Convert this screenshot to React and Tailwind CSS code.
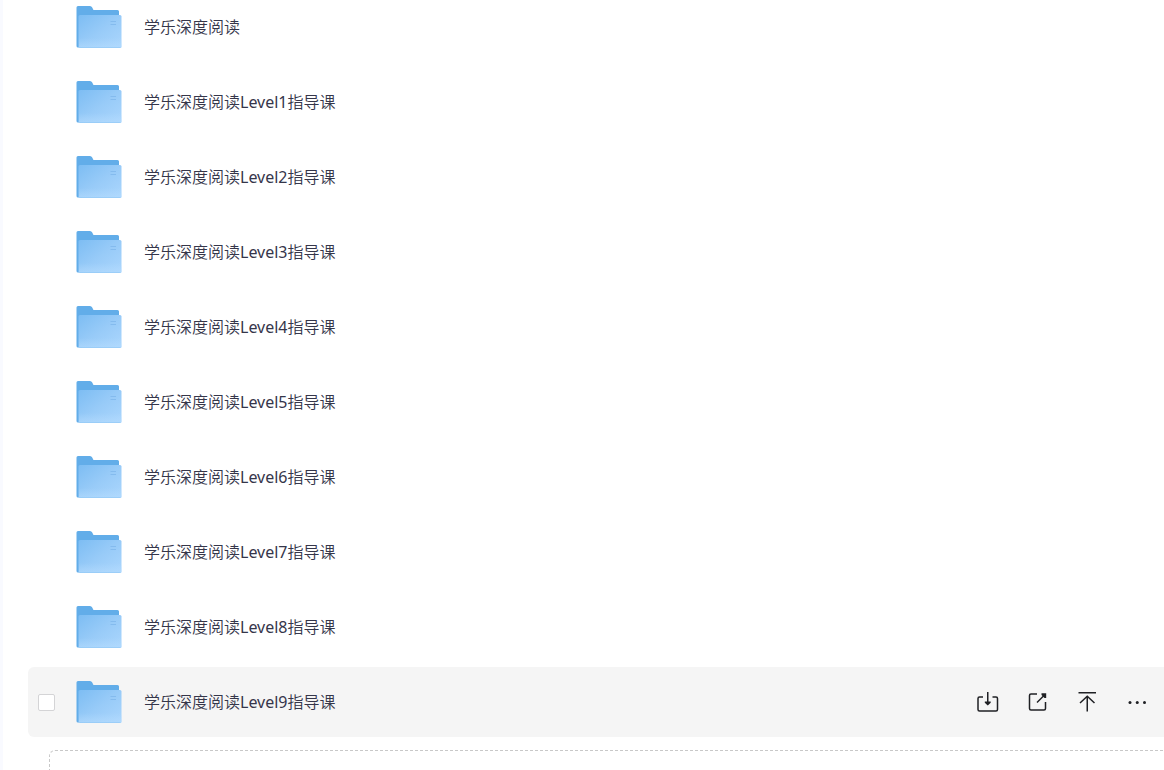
const folders = [
  "学乐深度阅读",
  "学乐深度阅读Level1指导课",
  "学乐深度阅读Level2指导课",
  "学乐深度阅读Level3指导课",
  "学乐深度阅读Level4指导课",
  "学乐深度阅读Level5指导课",
  "学乐深度阅读Level6指导课",
  "学乐深度阅读Level7指导课",
  "学乐深度阅读Level8指导课",
  "学乐深度阅读Level9指导课",
];

function FolderIcon() {
  return (
    <svg width="46" height="42" viewBox="0 0 46 42" className="shrink-0" aria-hidden="true">
      <defs>
        <linearGradient id="folder-front" x1="0" y1="0" x2="1" y2="1">
          <stop offset="0" stopColor="#7dbdf3" />
          <stop offset="0.5" stopColor="#98cbf8" />
          <stop offset="1" stopColor="#abd6fd" />
        </linearGradient>
        <linearGradient id="folder-shine" x1="0" y1="0" x2="0" y2="1">
          <stop offset="0" stopColor="#b5dcfe" stopOpacity="0" />
          <stop offset="1" stopColor="#b5dcfe" stopOpacity="0.6" />
        </linearGradient>
      </defs>
      <path d="M0.500 1.500Q0.500 0 2 0H14Q15.500 0 16.200 1.500L17.500 4H41.500Q43 4 43 5.500V41.500H2Q0.500 41.500 0.500 40Z" fill="#62ade9" />
      <rect x="2.500" y="9" width="43" height="33" rx="1.500" fill="url(#folder-front)" />
      <path d="M3 32H45.500V40.500Q45.500 42 44 42H4Q3 42 3 41Z" fill="url(#folder-shine)" />
      <path d="M3.500 41.600H44.500" stroke="#8cc4f4" strokeWidth="0.600" />
      <path d="M34.500 15.500H40M34.500 18.500H40" stroke="#84bbee" strokeWidth="1" />
    </svg>
  );
}

function DownloadIcon() {
  return (
    <svg width="24" height="24" viewBox="0 -1 24 24" fill="none" stroke="#1f2024" strokeWidth="1.5">
      <path d="M7 6H3.500Q2 6 2 7.500V18.500Q2 20 3.500 20H20Q21.500 20 21.500 18.500V7.500Q21.500 6 20 6H16.500" />
      <path d="M11.750 1V12" />
      <path d="M8.800 10.500H14.700V11.700L11.750 14.500L8.800 11.700Z" fill="#1f2024" stroke="none" />
    </svg>
  );
}

function ShareIcon() {
  return (
    <svg width="24" height="24" viewBox="0 -1 24 24" fill="none" stroke="#1f2024" strokeWidth="1.5">
      <path d="M11 3H5Q3.500 3 3.500 4.500V17.500Q3.500 19 5 19H18Q19.500 19 19.500 17.500V11" />
      <path d="M11 11.500L18.500 4" />
      <path d="M15.500 2.200H20.200V6.900H18.500L15.500 3.900Z" fill="#1f2024" stroke="none" />
    </svg>
  );
}

function TopIcon() {
  return (
    <svg width="24" height="24" viewBox="0 -1 24 24" fill="none" stroke="#1f2024" strokeWidth="1.5">
      <path d="M2.500 1.750H20M11.250 5.500V20.500M4 12L11.250 5.200L18.500 12" />
    </svg>
  );
}

function MoreIcon() {
  return (
    <svg width="24" height="24" viewBox="0 -1 24 24" fill="#1f2024">
      <circle cx="4" cy="11.500" r="1.500" />
      <circle cx="11.250" cy="11.500" r="1.500" />
      <circle cx="18.500" cy="11.500" r="1.500" />
    </svg>
  );
}

const actions = [
  { label: "下载", icon: <DownloadIcon /> },
  { label: "分享", icon: <ShareIcon /> },
  { label: "置顶", icon: <TopIcon /> },
  { label: "更多", icon: <MoreIcon /> },
];

function FolderRow({ name, active }) {
  return (
    <li className={`flex h-[70px] items-center rounded-l-md pl-[10px] pr-[14px] ${active ? "bg-[#f5f5f5]" : ""}`}>
      <div className="mr-[21px] flex w-[17px] shrink-0">
        {active && (
          <input
            type="checkbox"
            aria-label={name}
            className="size-[17px] appearance-none rounded-xs border border-[#d4d4d6] bg-white checked:bg-[#62ade9]"
          />
        )}
      </div>
      <FolderIcon />
      <a href="#" className="ml-[22px] flex-1 truncate text-base text-[#35364a]">
        {name}
      </a>
      {active && (
        <div className="flex gap-[26px]">
          {actions.map((action) => (
            <button key={action.label} type="button" aria-label={action.label} className="size-6">
              {action.icon}
            </button>
          ))}
        </div>
      )}
    </li>
  );
}

export default function App() {
  return (
    <div className="flex h-screen overflow-hidden bg-white font-['Noto_Sans','Noto_Sans_CJK_SC_DemiLight','Noto_Sans_CJK_SC',sans-serif]">
      <div className="w-[3px] shrink-0 bg-[#f9faff]" />
      <main className="min-w-0 flex-1 pl-[25px]">
        <ul className="-mt-2 flex flex-col gap-[5px]">
          {folders.map((name, i) => (
            <FolderRow key={name} name={name} active={i === folders.length - 1} />
          ))}
        </ul>
        <div className="mt-[13px] ml-[21px] h-16 rounded-tl-md border-t border-l border-dashed border-[#c8c8c8]" />
      </main>
    </div>
  );
}
